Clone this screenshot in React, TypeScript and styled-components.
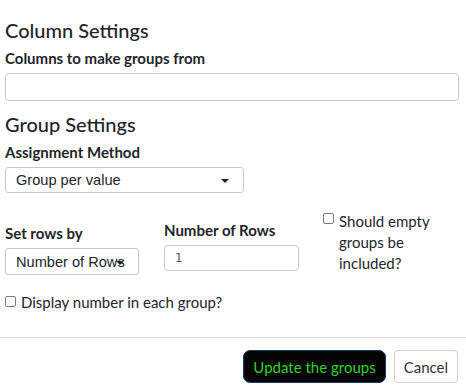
import React from "react";
import styled, { createGlobalStyle } from "styled-components";

const Global = createGlobalStyle`
  html, body { margin: 0; padding: 0; background: #fff; }
  body { font-family: Lato, "Noto Sans", sans-serif; color: #212529; }
  * { box-sizing: border-box; }
`;

const Body = styled.div`
  padding: 18px 7px 0 5px;
`;

const Heading = styled.h2`
  margin: 0;
  font-size: 20px;
  font-weight: 500;
  line-height: 24px;
`;

const SectionHeading = styled(Heading)`
  margin-top: 11px;
`;

const Label = styled.div<{ $mt?: number }>`
  margin: ${(p) => p.$mt ?? 6}px 0 4px;
  font-size: 15px;
  font-weight: 700;
  line-height: 21px;
`;

const TextInput = styled.div<{ $w?: string; $h?: number }>`
  width: ${(p) => p.$w ?? "100%"};
  height: ${(p) => p.$h ?? 28}px;
  border: 1px solid #c8c8c8;
  border-radius: 4px;
  background: #fff;
  display: flex;
  align-items: center;
  padding: 0 10px;
  font-family: "DejaVu Sans", sans-serif;
  font-size: 12px;
  color: #555;
`;

const SelectBox = styled.div<{ $w: number; $h: number }>`
  position: relative;
  width: ${(p) => p.$w}px;
  height: ${(p) => p.$h}px;
  border: 1px solid #c8c8c8;
  border-radius: 3px;
  background: #fff;
  display: flex;
  align-items: center;
  padding: 0 10px;
  font-family: "Liberation Sans", Arial, sans-serif;
  font-size: 14.6px;
  color: #212529;
  white-space: nowrap;
`;

const Arrow = styled.span<{ $right: number }>`
  position: absolute;
  right: ${(p) => p.$right}px;
  top: 50%;
  margin-top: -1px;
  width: 0;
  height: 0;
  border-left: 4px solid transparent;
  border-right: 4px solid transparent;
  border-top: 4px solid #222;
`;

const Row = styled.div`
  display: grid;
  grid-template-columns: 159px 159px 1fr;
  margin-top: 6px;
`;

const Col = styled.div<{ $pt: number }>`
  padding-top: ${(p) => p.$pt}px;
`;

const Check = styled.span`
  display: inline-block;
  flex: none;
  width: 11px;
  height: 11px;
  border: 1px solid #7a7a7a;
  border-radius: 2px;
  background: #fff;
`;

const CheckLine = styled.label<{ $mt: number; $checkTop: number }>`
  display: flex;
  align-items: flex-start;
  gap: 5px;
  margin-top: ${(p) => p.$mt}px;
  font-size: 15px;
  line-height: 21px;
  ${Check} {
    margin-top: ${(p) => p.$checkTop}px;
  }
`;

const CheckText = styled.span<{ $maxw?: number }>`
  max-width: ${(p) => (p.$maxw ? `${p.$maxw}px` : "none")};
`;

const Footer = styled.div`
  margin-top: 24px;
  border-top: 1px solid #dee2e6;
  display: flex;
  justify-content: flex-end;
  gap: 8px;
  padding: 12px 8px 0 0;
`;

const Button = styled.button<{ $primary?: boolean }>`
  height: 33px;
  padding: 0 9px;
  border-radius: ${(p) => (p.$primary ? 7 : 4)}px;
  border: 1px solid ${(p) => (p.$primary ? "#1d3a5c" : "#cfcfcf")};
  background: ${(p) => (p.$primary ? "#050505" : "#fff")};
  color: ${(p) => (p.$primary ? "#2bd12b" : "#333")};
  font-family: Lato, "Noto Sans", sans-serif;
  font-size: 15px;
  cursor: pointer;
`;

export default function App() {
  return (
    <>
      <Global />
      <Body>
        <Heading>Column Settings</Heading>
        <Label>Columns to make groups from</Label>
        <TextInput />
        <SectionHeading>Group Settings</SectionHeading>
        <Label>Assignment Method</Label>
        <SelectBox $w={239} $h={26}>
          Group per value
          <Arrow $right={14} />
        </SelectBox>
        <Row>
          <Col $pt={24}>
            <Label $mt={0}>Set rows by</Label>
            <SelectBox $w={134} $h={27}>
              Number of Rows
              <Arrow $right={14} />
            </SelectBox>
          </Col>
          <Col $pt={21}>
            <Label $mt={0}>Number of Rows</Label>
            <TextInput $w="135px" $h={26}>1</TextInput>
          </Col>
          <Col $pt={0}>
            <CheckLine $mt={12} $checkTop={2}>
              <Check />
              <CheckText $maxw={110}>Should empty groups be included?</CheckText>
            </CheckLine>
          </Col>
        </Row>
        <CheckLine $mt={17} $checkTop={4}>
          <Check />
          <CheckText>Display number in each group?</CheckText>
        </CheckLine>
      </Body>
      <Footer>
        <Button $primary>Update the groups</Button>
        <Button>Cancel</Button>
      </Footer>
    </>
  );
}
